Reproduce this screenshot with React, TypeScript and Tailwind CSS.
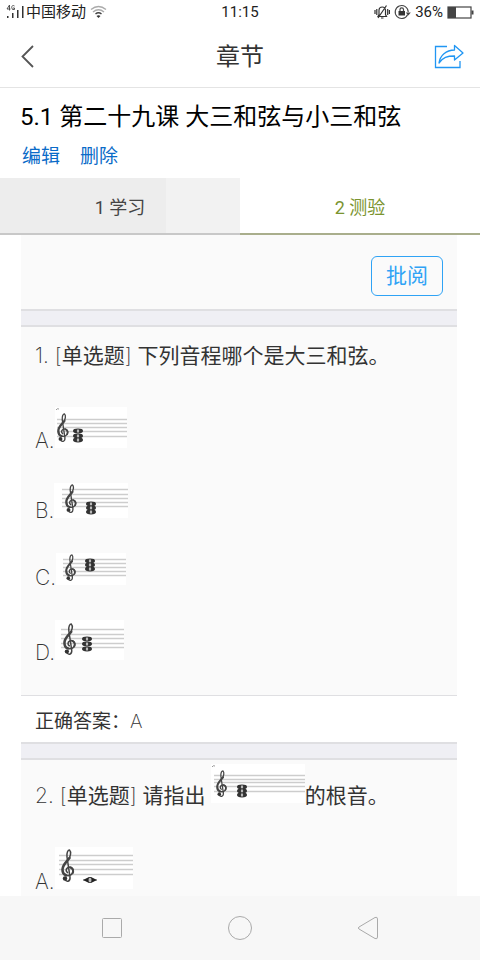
import type { ReactNode } from "react";

type Note = { x: number; y: number };

type StaffProps = {
  label: string;
  width: number;
  height: number;
  lines: number[];
  lineStart: number;
  clef: { x: number; y: number; height: number };
  notes: Note[];
  tick?: boolean;
};

const OPTIONS: { key: string; staff: StaffProps }[] = [
  {
    key: "A",
    staff: {
      label: "选项 A 乐谱",
      width: 72,
      height: 41,
      lines: [13, 17, 21, 25, 30],
      lineStart: 2,
      clef: { x: 2, y: 6, height: 29 },
      notes: [{ x: 23, y: 24 }, { x: 23, y: 29 }, { x: 23, y: 33 }],
      tick: true,
    },
  },
  {
    key: "B",
    staff: {
      label: "选项 B 乐谱",
      width: 74,
      height: 35,
      lines: [7, 12, 16, 20, 24],
      lineStart: 8,
      clef: { x: 11, y: 1, height: 29 },
      notes: [{ x: 37, y: 21 }, { x: 37, y: 25 }, { x: 37, y: 29 }],
    },
  },
  {
    key: "C",
    staff: {
      label: "选项 C 乐谱",
      width: 70,
      height: 32,
      lines: [7, 11, 15, 19, 23],
      lineStart: 7,
      clef: { x: 9, y: 1, height: 27 },
      notes: [{ x: 34, y: 8 }, { x: 34, y: 12 }, { x: 34, y: 16 }],
    },
  },
  {
    key: "D",
    staff: {
      label: "选项 D 乐谱",
      width: 69,
      height: 40,
      lines: [10, 15, 19, 24, 28],
      lineStart: 6,
      clef: { x: 8, y: 3, height: 32 },
      notes: [{ x: 32, y: 19 }, { x: 32, y: 24 }, { x: 32, y: 29 }],
    },
  },
];

const QUESTION_STAFF: StaffProps = {
  label: "题目乐谱",
  width: 94,
  height: 39,
  lines: [12, 16, 19, 23, 28],
  lineStart: 3,
  clef: { x: 5, y: 6, height: 27 },
  notes: [{ x: 31, y: 23 }, { x: 31, y: 27 }, { x: 31, y: 31 }],
  tick: true,
};

const ROOT_STAFF: StaffProps = {
  label: "选项 A 乐谱",
  width: 78,
  height: 42,
  lines: [9, 14, 18, 23, 28],
  lineStart: 4,
  clef: { x: 6, y: 2, height: 33 },
  notes: [{ x: 35, y: 33 }],
};

function Staff({ label, width, height, lines, lineStart, clef, notes, tick }: StaffProps) {
  const single = notes.length === 1;
  return (
    <svg
      role="img"
      aria-label={label}
      width={width}
      height={height}
      viewBox={`0 0 ${width} ${height}`}
      className="inline-block align-baseline"
    >
      <rect width={width} height={height} fill="#fff" />
      {lines.map(y => (
        <path key={y} d={`M${lineStart} ${y - 0.5}H${width}`} stroke="#cdcdcd" strokeWidth="1.5" />
      ))}
      {tick && <path d="M1 3Q2 1 4 2" stroke="#999" fill="none" />}
      <g
        transform={`translate(${clef.x} ${clef.y}) scale(${clef.height / 33})`}
        fill="none"
        stroke="#444"
        strokeLinecap="round"
      >
        <path strokeWidth="1.5" d="M4 30C5 33.500 9.500 33 9 28L6 8C5.500 3.500 7 1 8.500 1C10.500 3 9.500 7.500 7.500 10" />
        <path strokeWidth="2.600" d="M8.500 9C5.500 13 1.500 15.500 1.500 20.500C1.500 23.500 3 25.500 5 26.200" />
        <path strokeWidth="1.6" d="M5 26.200C9 27.500 12.500 25 12.200 21.500C12 18.500 9 17.500 7 18.500C4.500 19.800 4.800 22.500 6.500 23.500" />
        <path strokeWidth="2" d="M9.500 18.500C12 19.500 12.800 22 11.500 24.200" />
        <circle cx="4" cy="29.500" r="2.200" fill="#333" stroke="none" />
      </g>
      {notes.map(n =>
        single ? (
          <g key={n.y}>
            <path d={`M${n.x - 7} ${n.y}h14`} stroke="#777" />
            <path d={`M${n.x - 7} ${n.y}l6 -3h2l6 3l-6 3h-2z`} fill="#222" />
            <ellipse cx={n.x} cy={n.y} rx="1.5" ry="2.500" fill="#bbb" />
          </g>
        ) : (
          <g key={n.y}>
            <ellipse cx={n.x} cy={n.y} rx="5" ry="2.400" fill="#333" />
            <ellipse cx={n.x} cy={n.y} rx="1.2" ry="1.8" fill="#bbb" />
          </g>
        )
      )}
    </svg>
  );
}

function Latin({ children }: { children: ReactNode }) {
  return <span className="font-['Inter','Noto_Sans_CJK_SC',sans-serif] font-extralight">{children}</span>;
}

function Divider() {
  return <div className="h-[18px] border-y-2 border-[#dfdfe2] bg-[#efeff4]" />;
}

function StatusBar() {
  return (
    <div className="grid h-6 grid-cols-[1fr_auto_1fr] items-center pr-1.5 pl-1.5 text-[15px] leading-6 text-[#222]">
      <div className="flex items-center">
        <svg width="20" height="16" viewBox="0 0 20 16" aria-hidden="true">
          <g fill="none" stroke="#444" strokeWidth="0.9">
            <path d="M3.500 6.500V1L1 5H4.500M8.500 2Q6 .5 5.700 3.500Q6 6.500 8.500 5.500V4H7" />
          </g>
          <path d="M1 12h1.500v2H1zM6 9h1.500v5H6zM11 6h1.500v8H11zM16 2h1.500v12H16z" fill="#333" />
        </svg>
        <span>中国移动</span>
        <svg width="17" height="14" viewBox="0 0 17 14" className="ml-1" fill="none" aria-hidden="true">
          <path d="M1 4.500Q8.500-1.500 16 4.500M3 7Q8.500 2.500 14 7" stroke="#aaa" strokeWidth="1.4" />
          <path d="M5.500 9Q8.500 6.500 11.500 9" stroke="#444" strokeWidth="1.5" />
          <path d="M6.500 11Q8.500 9.500 10.500 11L8.500 13Z" fill="#333" />
        </svg>
      </div>
      <time>11:15</time>
      <div className="flex items-center justify-end">
        <svg width="16" height="16" viewBox="0 0 16 16" fill="none" stroke="#333" strokeWidth="1.2" aria-hidden="true">
          <path d="M4 12.500H12.500L11.500 10.500V6Q11.200 3 8.200 3Q5.200 3 5 6V10.500ZM12.500 1.500L4 14M1 6V10M2.800 5V11M13.700 5V11M15.400 6V10M7 14H9.500" />
        </svg>
        <svg width="17" height="16" viewBox="0 0 17 16" className="ml-1" fill="none" stroke="#444" aria-hidden="true">
          <path d="M13.700 10.500A6.500 6.500 0 1 1 14.200 8" strokeWidth="1.1" />
          <path d="M11.800 8.500H16.800L14.300 11.500Z" fill="#444" stroke="none" />
          <path d="M4.500 7H11V11.500H4.500Z" fill="#333" stroke="none" />
          <path d="M6 7V5.500Q6 3.800 7.700 3.800Q9.500 3.800 9.500 5.500V7" strokeWidth="1.2" />
        </svg>
        <span className="ml-1">36%</span>
        <svg width="27" height="13" viewBox="0 0 27 13" className="ml-1" fill="none" aria-hidden="true">
          <rect x="1" y="1" width="23" height="11" stroke="#444" strokeWidth="1.2" />
          <rect x="1" y="1" width="8" height="11" fill="#444" />
          <rect x="24.500" y="4.500" width="2" height="4" fill="#444" />
        </svg>
      </div>
    </div>
  );
}

export default function App() {
  return (
    <div className="flex h-screen flex-col bg-white font-['Roboto','Noto_Sans_CJK_SC',sans-serif] text-[#333]">
      <StatusBar />

      <header className="grid h-16 shrink-0 grid-cols-[1fr_auto_1fr] items-center border-b border-[#e4e4e4] px-4 pt-0.5">
        <button type="button" aria-label="返回" className="justify-self-start">
          <svg width="24" height="24" viewBox="0 0 24 24" fill="none" stroke="#555" strokeWidth="1.8">
            <path d="M17 1L6.500 11.500L17 22" />
          </svg>
        </button>
        <h1 className="text-2xl">章节</h1>
        <button type="button" aria-label="分享" className="justify-self-end">
          <svg width="30" height="26" viewBox="0 0 30 26" fill="none" stroke="#2196f3" strokeWidth="1.3">
            <path d="M13 2.500H1.500V23.500H26V17" />
            <path d="M20.500 1.500L29 9L20.500 16V12C13 12 9 13.500 5 19C6 11.500 12 6 20.500 6Z" strokeLinejoin="round" />
          </svg>
        </button>
      </header>

      <section className="shrink-0 px-5 pt-[13px] pb-2">
        <h2 className="text-2xl leading-8 text-black">5.1 第二十九课 大三和弦与小三和弦</h2>
        <div className="mt-[11px] flex gap-5 pl-0.5 text-[19px] leading-[26px] text-[#0a6bc8]">
          <a href="#edit">编辑</a>
          <a href="#delete">删除</a>
        </div>
      </section>

      <nav className="grid shrink-0 grid-cols-2 text-lg leading-[51px]">
        <button
          type="button"
          className="border-b-2 border-[#c8c8c8] bg-[linear-gradient(to_right,#ededed_69%,#f2f2f2_69%)] pt-1 text-[#444]"
        >
          1 学习
        </button>
        <button type="button" className="border-b-2 border-[#a9ae8c] pt-1 text-[#7b9430]">
          2 测验
        </button>
      </nav>

      <main className="min-h-0 flex-1 overflow-y-auto pr-[23px] pl-[21px] [scrollbar-width:none]">
        <div className="bg-[#fafafa] text-[21px] leading-6">
          <div className="flex justify-end px-3.5 pt-[21px] pb-[13px]">
            <button type="button" className="h-10 w-[72px] rounded-md border border-[#2fa3f5] text-[#2fa3f5]">
              批阅
            </button>
          </div>
          <Divider />

          <article className="px-3.5 pt-[17px] pb-[30px]">
            <p>
              <Latin>1. [</Latin>单选题<Latin>] </Latin>下列音程哪个是大三和弦。
            </p>
            <ul className="mt-[39px] space-y-[30px]">
              {OPTIONS.map(option => (
                <li key={option.key}>
                  <Latin>{option.key}.</Latin>
                  <Staff {...option.staff} />
                </li>
              ))}
            </ul>
          </article>
          <p className="border-t border-[#dfdfe2] bg-white px-3.5 pt-1.5 text-[19px] leading-10">
            正确答案：<Latin>A</Latin>
          </p>
          <Divider />

          <article className="px-3.5 pt-1 pb-7">
            <p>
              <Latin>2. [</Latin>单选题<Latin>] </Latin>请指出 <Staff {...QUESTION_STAFF} />的根音。
            </p>
            <ul className="mt-[39px]">
              <li>
                <Latin>A.</Latin>
                <Staff {...ROOT_STAFF} />
              </li>
            </ul>
          </article>
        </div>
      </main>

      <footer className="flex h-16 shrink-0 items-center justify-around bg-[#f7f7f7] px-12">
        <button type="button" aria-label="最近任务">
          <svg width="24" height="24" viewBox="0 0 24 24" fill="none" stroke="#aaa">
            <rect x="2.500" y="2.500" width="19" height="19" rx="1" />
          </svg>
        </button>
        <button type="button" aria-label="主屏幕">
          <svg width="26" height="26" viewBox="0 0 26 26" fill="none" stroke="#aaa">
            <circle cx="13" cy="13" r="11.500" />
          </svg>
        </button>
        <button type="button" aria-label="返回上一页">
          <svg width="24" height="24" viewBox="0 0 24 24" fill="none" stroke="#aaa" strokeLinejoin="round">
            <path d="M3 11L19 1.500Q21.500.5 21.500 3V21Q21.500 23.500 19 22.500L3 13Q1.500 12 3 11Z" />
          </svg>
        </button>
      </footer>
    </div>
  );
}
